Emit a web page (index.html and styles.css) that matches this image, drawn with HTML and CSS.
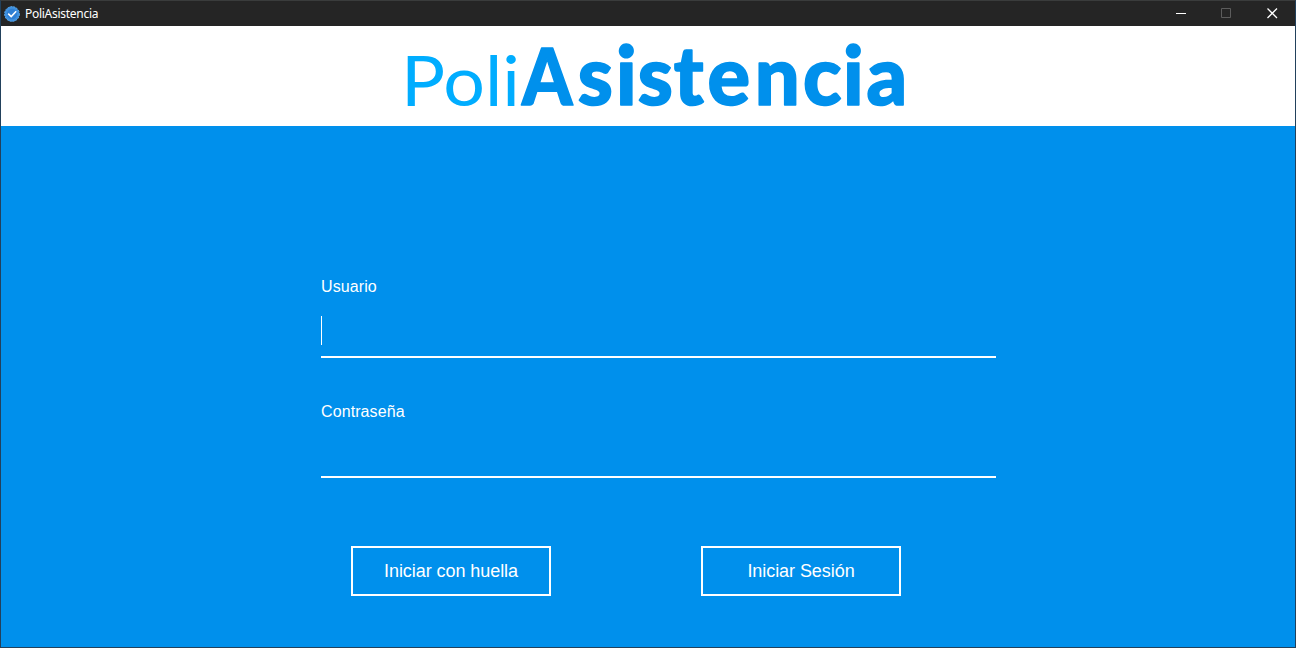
FILE: index.html
```html
<!DOCTYPE html>
<html lang="es">
<head>
<meta charset="utf-8">
<title>PoliAsistencia</title>
<link rel="stylesheet" href="styles.css">
</head>
<body>
<div class="window">
  <header class="titlebar">
    <svg class="app-icon" viewBox="0 0 16 16" width="16" height="16">
      <circle cx="8" cy="8" r="7.4" fill="#3e91e0" stroke="#5aa7ea" stroke-width="1" stroke-dasharray="2 1"/>
      <circle cx="8" cy="8" r="5.2" fill="#2f7fd3"/>
      <path d="M4.200 7.600l3 3 5-5.400" fill="none" stroke="#fff" stroke-width="1.600"/>
    </svg>
    <span class="title">PoliAsistencia</span>
    <div class="controls">
      <svg viewBox="0 0 46 25" width="46" height="25"><path d="M19 12.500h10" stroke="#fff"/></svg>
      <svg viewBox="0 0 46 25" width="46" height="25"><path d="M18.500 7.500h9v9h-9z" fill="none" stroke="#5c5c5c"/></svg>
      <svg viewBox="0 0 46 25" width="46" height="25"><path d="M18.500 7.500l9.500 9.500M28 7.500l-9.500 9.500" stroke="#fff" stroke-width="1.300"/></svg>
    </div>
  </header>
  <div class="banner">
    <svg class="logo" viewBox="0 0 1294 100" width="1294" height="100">
      <text class="logo-light" x="400" y="80" textLength="119" lengthAdjust="spacingAndGlyphs">Poli</text>
      <text class="logo-bold initial" transform="scale(.92 1)" x="566.300" y="79.300">A</text>
      <text class="logo-bold" transform="scale(.98 1)" x="588.500 627.600 649.700 686.500 721 769.200 818.400 859.200 883.200" y="79.300">sistencia</text>
    </svg>
  </div>
  <main class="login">
    <form class="form">
      <label class="field">
        <span class="label">Usuario</span>
        <span class="input"><span class="caret"></span></span>
      </label>
      <label class="field second">
        <span class="label">Contraseña</span>
        <span class="input"></span>
      </label>
      <div class="actions">
        <button class="btn" type="button">Iniciar con huella</button>
        <button class="btn" type="button">Iniciar Sesión</button>
      </div>
    </form>
  </main>
</div>
</body>
</html>
```
FILE: styles.css
```css
* { box-sizing: border-box; }
body { margin: 0; font-family: "Liberation Sans", Arial, sans-serif; }
.window {
  width: 1296px;
  height: 648px;
  display: flex;
  flex-direction: column;
  border: 1px solid #22415c;
  border-top-color: #3a3c3c;
  background: #0090ec;
}
.titlebar {
  height: 25px;
  display: flex;
  align-items: center;
  padding-left: 3px;
  background: #252525;
  color: #fff;
}
.title {
  margin-left: 5px;
  font: 12px/16px "Noto Sans", sans-serif;
  letter-spacing: -0.28px;
}
.controls { display: flex; margin-left: auto; }
.controls svg { display: block; }
.banner { height: 100px; background: #fff; }
.logo { display: block; overflow: visible; }
.logo text { font-family: Lato, sans-serif; }
.logo-light { font-size: 70px; font-weight: 400; fill: #00adff; }
.logo-bold {
  font-size: 81px;
  font-weight: 900;
  fill: #0090ec;
  stroke: #0090ec;
  stroke-width: 1.6px;
  stroke-linejoin: round;
}
.logo text.initial { font-size: 78px; }
.login { flex: 1; padding: 152px 0 0 320px; color: #fff; }
.form { width: 675px; }
.field { display: block; }
.second { margin-top: 45px; }
.label { display: block; font-size: 16px; line-height: 18px; letter-spacing: 0.1px; }
.input {
  display: block;
  height: 62px;
  padding-top: 20px;
  border-bottom: 2px solid #fff;
}
.second .input { height: 57px; }
.caret { display: block; width: 1px; height: 29px; background: #fff; }
.actions { display: flex; gap: 150px; padding: 68px 0 0 30px; }
.btn {
  width: 200px;
  height: 50px;
  padding: 0;
  border: 2px solid #fff;
  background: transparent;
  color: #fff;
  font: 18px "Liberation Sans", Arial, sans-serif;
  letter-spacing: -0.06px;
}
```
